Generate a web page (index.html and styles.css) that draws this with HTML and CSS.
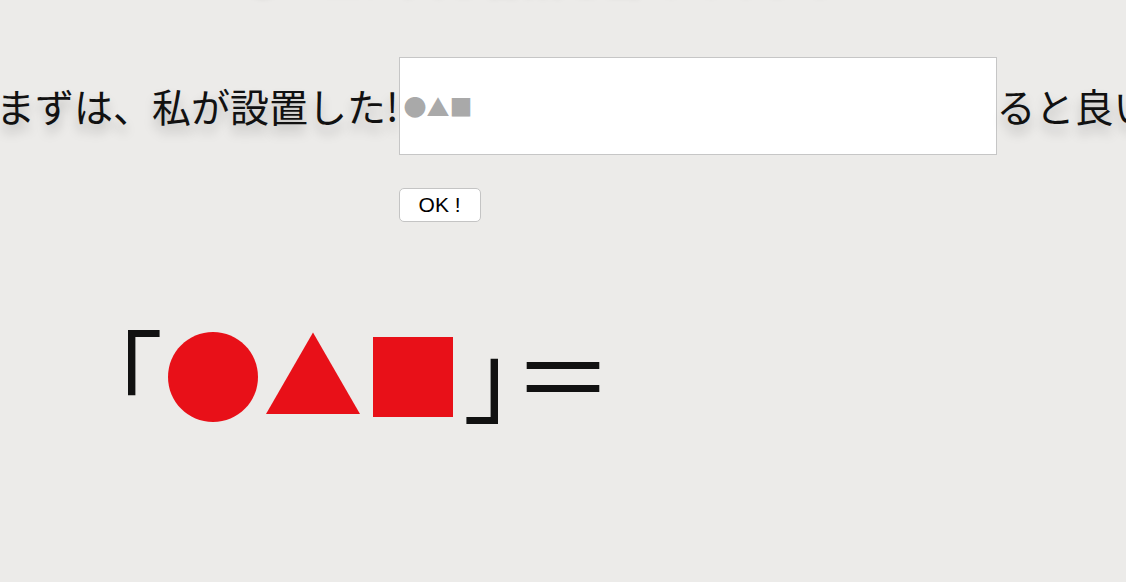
FILE: index.html
```html
<!DOCTYPE html>
<html lang="ja">
<head>
<meta charset="utf-8">
<title>●▲■</title>
<link rel="stylesheet" href="styles.css">
</head>
<body>
<div class="page">
  <div class="ghost">●▲■に入る言葉を当ててみよう！</div>
  <div class="line">
    <span class="lead">まずは、私が設置した!</span>
    <form class="form">
      <input class="answer" type="text" placeholder="●▲■">
      <button class="ok" type="button">OK !</button>
    </form>
    <span class="tail">ると良いでしょう。</span>
  </div>
  <div class="big"><span class="br">「</span><span class="red">●▲■</span><span class="br close">」</span><span class="eq">＝</span></div>
</div>
</body>
</html>
```

FILE: styles.css
```css
html, body {
  margin: 0;
  padding: 0;
  background: #ecebe9;
}
body {
  font-family: "Noto Sans CJK JP", "Noto Sans", sans-serif;
  color: #111;
  overflow: hidden;
  width: 1126px;
  height: 582px;
}
.page {
  display: flex;
  flex-direction: column;
}
.ghost {
  height: 40px;
  margin: -52px 0 69px;
  font-size: 40px;
  line-height: 40px;
  text-align: center;
  color: transparent;
  text-shadow: 0 8px 7px rgba(0, 0, 0, 0.22);
  white-space: nowrap;
}
.line {
  display: flex;
  align-items: flex-start;
  white-space: nowrap;
  margin-left: -4px;
}
.lead, .tail {
  font-size: 39px;
  line-height: 39px;
  margin-top: 29px;
  flex: none;
  text-shadow: 0 8px 12px rgba(0, 0, 0, 0.22);
}
.form {
  display: flex;
  flex-direction: column;
  align-items: flex-start;
  gap: 33px;
  margin: 0;
  flex: none;
}
.answer {
  box-sizing: border-box;
  width: 598px;
  height: 98px;
  margin: 0;
  padding: 0 4px;
  border: 1px solid #c6c6c6;
  background: #fff;
  font-family: "Noto Sans CJK JP", sans-serif;
  font-size: 23px;
  outline: none;
}
.answer::placeholder {
  color: #a9a9a9;
}
.ok {
  box-sizing: border-box;
  width: 82px;
  height: 34px;
  margin: 0;
  padding: 0 0 1px;
  border: 1px solid #c4c4c4;
  border-radius: 5px;
  background: #fff;
  font-family: "Liberation Sans", "Noto Sans", sans-serif;
  font-size: 21px;
  color: #000;
}
.big {
  margin: 90px 0 0 63px;
  font-size: 100px;
  line-height: 120px;
  white-space: nowrap;
  color: #111;
}
.close {
  font-feature-settings: "halt" 1;
}
.red {
  color: #e81018;
}
```
